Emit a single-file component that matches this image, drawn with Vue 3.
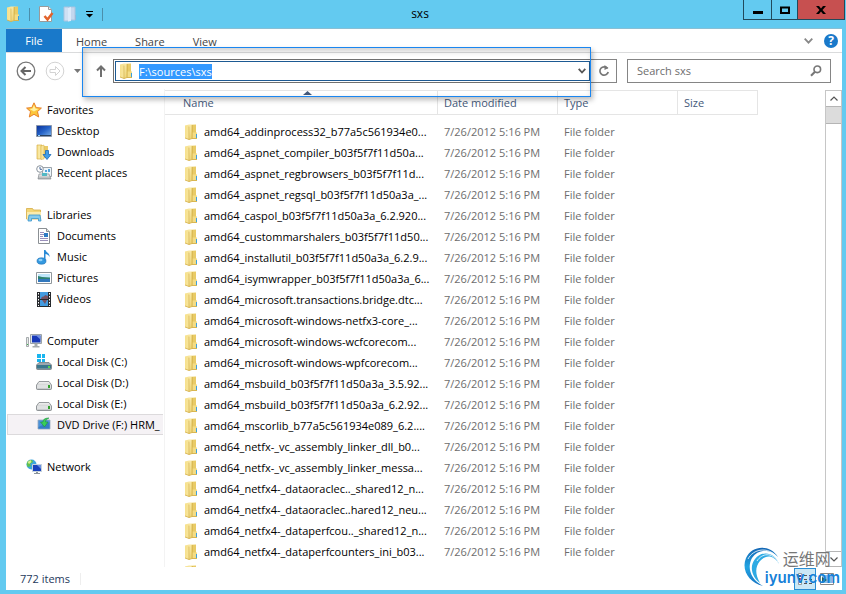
<script setup>
import { ref, onMounted } from 'vue'

const path = ref('F:\\sources\\sxs')
const query = ref('')
const pathInput = ref(null)

const groups = [
  { name: 'Favorites', icon: 'star', items: [
    { name: 'Desktop', icon: 'desktop' },
    { name: 'Downloads', icon: 'downloads' },
    { name: 'Recent places', icon: 'recent' },
  ] },
  { name: 'Libraries', icon: 'libraries', items: [
    { name: 'Documents', icon: 'document' },
    { name: 'Music', icon: 'music' },
    { name: 'Pictures', icon: 'picture' },
    { name: 'Videos', icon: 'video' },
  ] },
  { name: 'Computer', icon: 'computer', items: [
    { name: 'Local Disk (C:)', icon: 'system' },
    { name: 'Local Disk (D:)', icon: 'disk' },
    { name: 'Local Disk (E:)', icon: 'disk' },
    { name: 'DVD Drive (F:) HRM_', icon: 'dvd', selected: true },
  ] },
  { name: 'Network', icon: 'network', items: [] },
]

const files = [
  'amd64_addinprocess32_b77a5c561934e0...',
  'amd64_aspnet_compiler_b03f5f7f11d50a...',
  'amd64_aspnet_regbrowsers_b03f5f7f11d...',
  'amd64_aspnet_regsql_b03f5f7f11d50a3a_...',
  'amd64_caspol_b03f5f7f11d50a3a_6.2.920...',
  'amd64_custommarshalers_b03f5f7f11d50...',
  'amd64_installutil_b03f5f7f11d50a3a_6.2.9...',
  'amd64_isymwrapper_b03f5f7f11d50a3a_6...',
  'amd64_microsoft.transactions.bridge.dtc...',
  'amd64_microsoft-windows-netfx3-core_...',
  'amd64_microsoft-windows-wcfcorecom...',
  'amd64_microsoft-windows-wpfcorecom...',
  'amd64_msbuild_b03f5f7f11d50a3a_3.5.92...',
  'amd64_msbuild_b03f5f7f11d50a3a_6.2.92...',
  'amd64_mscorlib_b77a5c561934e089_6.2....',
  'amd64_netfx-_vc_assembly_linker_dll_b0...',
  'amd64_netfx-_vc_assembly_linker_messa...',
  'amd64_netfx4-_dataoraclec.._shared12_n...',
  'amd64_netfx4-_dataoraclec..hared12_neu...',
  'amd64_netfx4-_dataperfcou.._shared12_n...',
  'amd64_netfx4-_dataperfcounters_ini_b03...',
]

onMounted(() => {
  pathInput.value.focus()
  pathInput.value.select()
})
</script>

<template>
  <div class="window">
    <svg class="defs" aria-hidden="true">
      <defs>
        <linearGradient id="gold" x1="0" x2="1" y1="0" y2="0">
          <stop offset="0" stop-color="#f6e08c" /><stop offset=".5" stop-color="#f9e9a6" /><stop offset="1" stop-color="#e6c65c" />
        </linearGradient>
        <linearGradient id="flap" x1="0" x2="1" y1="0" y2="1">
          <stop offset="0" stop-color="#fdf3bd" /><stop offset="1" stop-color="#e8c95f" />
        </linearGradient>
        <linearGradient id="screen" x1="0" x2="1" y1="0" y2="1">
          <stop offset="0" stop-color="#0a2f96" /><stop offset=".5" stop-color="#2563c8" /><stop offset="1" stop-color="#7fb4ea" />
        </linearGradient>
        <linearGradient id="metal" x1="0" x2="0" y1="0" y2="1">
          <stop offset="0" stop-color="#f4f4f4" /><stop offset="1" stop-color="#a9acae" />
        </linearGradient>
        <linearGradient id="swirl" x1="0" x2="0" y1="0" y2="1">
          <stop offset="0" stop-color="#1466b4" /><stop offset=".5" stop-color="#22a4e2" /><stop offset="1" stop-color="#1673c4" />
        </linearGradient>
        <symbol id="i-folder" viewBox="0 0 14 16">
          <path d="M1 1.500L5 .5h7v8l1 1v5l-6 .5-2 .5-4-1.500z" fill="url(#gold)" />
          <path d="M8 1h4v8H8z" fill="#e9cb66" />
          <path d="M8 8.500h5v6H8z" fill="#f3dc85" />
          <path d="M5 2.500L8 1v13l-3 1.500z" fill="url(#flap)" />
          <path d="M5 2.500v13" stroke="#d2ac42" stroke-width=".7" />
          <path d="M8.200 1v13.500" stroke="#c9a23a" stroke-width=".6" />
          <path d="M1 14l4 1.500 3-1h5" fill="none" stroke="#d2ac42" stroke-width=".8" />
          <path d="M12 10h1v4h-1z" fill="#3b9fe0" />
        </symbol>
        <symbol id="i-star" viewBox="0 0 16 16">
          <path d="M8 .8l2.200 4.800 5.200.5-3.900 3.500 1.200 5.400L8 12.300 3.300 15l1.200-5.400L.6 6.100l5.200-.5z" fill="#fcc63a" stroke="#e8812a" />
          <path d="M8 3l1.400 3.600 3 .3L8 9.500 3.500 7l3-.4z" fill="#fff0a0" />
        </symbol>
        <symbol id="i-desktop" viewBox="0 0 16 16">
          <path d="M.5 2.500h15v11H.5z" fill="url(#screen)" stroke="#8a97ad" />
          <path d="M1 12h14v1H1z" fill="#26405f" /><path d="M2 12h2v1H2z" fill="#8fd0ff" />
        </symbol>
        <symbol id="i-downloads" viewBox="0 0 16 16">
          <path d="M1 1h5v14H1z" fill="url(#gold)" stroke="#d7b047" stroke-width=".7" />
          <path d="M6 2h6v12H6z" fill="#eacb68" /><path d="M5 2l3-1v14l-3 .5z" fill="#f8e49a" stroke="#d7b047" stroke-width=".5" />
          <path d="M9.500 6.500h3v4h2.500L11 15.500 7 10.500h2.500z" fill="#409ee8" stroke="#1c69b5" stroke-width=".8" />
        </symbol>
        <symbol id="i-recent" viewBox="0 0 16 16">
          <path d="M6.500 2.500h9v9h-9z" fill="#edf5fa" stroke="#9ba3aa" />
          <path d="M9 5h2v2H9zM12 4h2v3h-2z" fill="#54a5dd" />
          <path d="M3 9h10l2 5H2z" fill="url(#metal)" stroke="#858b90" stroke-width=".7" />
          <path d="M6 8h5v3H6z" fill="#52b8c4" /><circle cx="4" cy="4" r="3.300" fill="#fff" stroke="#8b949d" />
          <path d="M4 2v2.300h2" fill="none" stroke="#43679b" />
        </symbol>
        <symbol id="i-libraries" viewBox="0 0 16 16">
          <path d="M.5 1.500h6l1 1.500h7v9H.5z" fill="#f4d675" stroke="#d5ac45" stroke-width=".8" />
          <path d="M1 5h14v7H1z" fill="#fbebac" />
          <path d="M3 8h11l1 6h-2.500v-2.500h-7V14H2z" fill="#86cbed" stroke="#3996cc" stroke-width=".8" />
        </symbol>
        <symbol id="i-document" viewBox="0 0 16 16">
          <path d="M2.500 .5h8l3 3v12h-11z" fill="#fff" stroke="#8b9094" /><path d="M10.500 .5v3h3" fill="#ddd" stroke="#8b9094" />
          <path d="M4 4.500h4M4 6.500h4M4 8.500h3M4 10.500h8M4 12.500h8" stroke="#9a8fba" /><path d="M8 5h4v4H8z" fill="#2f7cc4" />
        </symbol>
        <symbol id="i-music" viewBox="0 0 16 16">
          <ellipse cx="5.500" cy="12" rx="4.500" ry="3.200" fill="#3399e0" stroke="#1c6db2" stroke-width=".6" />
          <path d="M8 12V1h1.500c.5 2.500 4.500 3 4 7-.7-2-2-2.600-4-3v7z" fill="#2a8bd6" /><ellipse cx="4.500" cy="11" rx="2" ry="1.200" fill="#8fd0f7" />
        </symbol>
        <symbol id="i-picture" viewBox="0 0 16 16">
          <path d="M.5 2.500h15v11H.5z" fill="#fff" stroke="#8f969b" /><path d="M2 4h12v8H2z" fill="#bfe6fa" />
          <path d="M2 6l4 1 8 .5V9H2z" fill="#2d8271" /><path d="M2 9h12v3H2z" fill="#3278bd" />
        </symbol>
        <symbol id="i-video" viewBox="0 0 16 16">
          <path d="M1 1h14v15H1z" fill="#26292d" /><path d="M4 1h8v7H4zM4 9h8v6H4z" fill="#439be0" />
          <path d="M5 8c1-4 3-1 4-4l3 1v3zM6 9h5l-2 4z" fill="#765263" />
          <path d="M2.500 2v13M13.500 2v13" stroke="#fff" stroke-dasharray="1.500 1.500" />
        </symbol>
        <symbol id="i-computer" viewBox="0 0 16 16">
          <path d="M.5 4.500h2v9h-2z" fill="#e8eaea" stroke="#92989b" stroke-width=".8" /><path d="M1 11h1v1H1z" fill="#3ab64b" />
          <path d="M4.500 1.500h11v9h-11z" fill="#dde3e6" stroke="#9ba3a8" /><path d="M6 2.500h8.500v7H6z" fill="#1738b8" /><path d="M10 2.500h4.500v4z" fill="#7190e3" />
          <path d="M8.500 11h3v2h2v1.500h-7V13h2z" fill="#a5abae" />
        </symbol>
        <symbol id="i-disk" viewBox="0 0 16 16">
          <path d="M3 6.500h10l2.500 3.500v3.500q0 1-1 1h-13q-1 0-1-1V10z" fill="url(#metal)" stroke="#7e8386" stroke-width=".8" />
          <path d="M1 10h14v3.500H1z" fill="#dfe1e2" /><path d="M12 10h2v3h-2z" fill="#33a02e" />
        </symbol>
        <symbol id="i-system" viewBox="0 0 16 16">
          <path d="M3 8.500h10l2.500 2.500v3.500q0 1-1 1h-13q-1 0-1-1V11z" fill="#9ba7ae" stroke="#727a7f" stroke-width=".8" />
          <path d="M1 11h14v3.500H1z" fill="#3b778d" /><path d="M12 12h2v2h-2z" fill="#57d64c" />
          <path d="M1 0h4v4H1zM6 0h3v4H6zM1 5h4v3H1zM6 5h3v3H6z" fill="#19b5ef" />
        </symbol>
        <symbol id="i-dvd" viewBox="0 0 16 16">
          <path d="M2 3h12v9H2z" fill="#4b92da" stroke="#9aa9bb" stroke-width=".8" /><path d="M2.500 10l11-5v6.500h-11z" fill="#367cc6" />
          <path d="M13 1C8 1 7 3 7 5H4.500l4 5 3.500-5H9.500c0-2 1.500-3 3.500-4z" fill="#39cd58" stroke="#17893b" stroke-width=".5" />
        </symbol>
        <symbol id="i-network" viewBox="0 0 16 16">
          <circle cx="5.500" cy="5.500" r="5" fill="#3ea7dd" /><path d="M2 2c3-2 5-1 5 1L4 5l1 2-3 1C0 6 1 3 2 2z" fill="#5fc04e" /><path d="M1.500 3l3-2 1 2-2.500 2z" fill="#d9ee92" />
          <path d="M6.500 5.500h9v7h-9z" fill="#1b43bd" stroke="#c7d2da" /><path d="M11 6h4v4z" fill="#6a91e4" /><path d="M10 13h2v1h2v1H8v-1h2z" fill="#8b959c" />
        </symbol>
      </defs>
    </svg>

    <header class="titlebar">
      <div class="quick">
        <svg class="folder"><use href="#i-folder" /></svg>
        <span class="bar"></span>
        <button type="button" aria-label="Properties">
          <svg width="15" height="16" viewBox="0 0 15 16"><path d="M.5 .5h9l3 3v12H.5z" fill="#fff" stroke="#9a9a9a" /><path d="M9.500 .5v3h3" fill="#eee" stroke="#9a9a9a" /><path d="M5.500 10l3 3.500L13.500 7" fill="none" stroke="#e2632c" stroke-width="2.500" /></svg>
        </button>
        <button type="button" aria-label="New folder">
          <svg width="14" height="16" viewBox="0 0 14 16"><path d="M1 1h5v14H1z" fill="#cfe0f3" stroke="#a9c3df" /><path d="M6 1h6v13H6z" fill="#c4d7ee" stroke="#a9c3df" /><path d="M5 2l3-1v14l-3 .5z" fill="#dceafa" /><path d="M12 9h1v5h-1z" fill="#94b8db" /></svg>
        </button>
        <button type="button" aria-label="Customize">
          <svg width="7" height="7" viewBox="0 0 7 7"><path d="M0 0h7v1H0zM0 3h7L3.500 6.500z" /></svg>
        </button>
        <span class="bar"></span>
      </div>
      <h1>sxs</h1>
      <div class="controls">
        <button type="button" class="min" aria-label="Minimize"><svg width="10" height="10"><path d="M0 6h10v3H0z" /></svg></button>
        <button type="button" class="max" aria-label="Maximize"><svg width="10" height="8"><path d="M1 1.500h8v5.500H1z" fill="none" stroke="#000" stroke-width="2" /></svg></button>
        <button type="button" class="close" aria-label="Close"><svg width="10" height="8" viewBox="0 0 10 8"><path d="M0 0h3l2 2.500L7 0h3L6.500 4 10 8H7L5 5.500 3 8H0l3.500-4z" /></svg></button>
      </div>
    </header>

    <div class="client">
      <nav class="tabs">
        <a href="#file" class="file">File</a>
        <a href="#home">Home</a>
        <a href="#share">Share</a>
        <a href="#view">View</a>
        <span class="grow"></span>
        <button type="button" aria-label="Expand ribbon"><svg width="9" height="6" viewBox="0 0 9 6"><path d="M.7 .7l3.800 4 3.800-4" fill="none" stroke="#888" stroke-width="1.800" /></svg></button>
        <button type="button" aria-label="Help" class="help">?</button>
      </nav>

      <div class="navbar">
        <div class="history">
          <button type="button" aria-label="Back"><svg width="20" height="20" viewBox="0 0 20 20"><circle cx="10" cy="10" r="8.800" fill="none" stroke="#777" stroke-width="1.300" /><path d="M15 10H6M9.500 6L5.500 10l4 4" fill="none" stroke="#666" stroke-width="2" /></svg></button>
          <button type="button" aria-label="Forward"><svg width="20" height="20" viewBox="0 0 20 20"><circle cx="10" cy="10" r="8.800" fill="none" stroke="#d3d3d3" /><path d="M5 8.500h5.500V5.500L15 10l-4.500 4.500v-3H5z" fill="none" stroke="#d3d3d3" /></svg></button>
          <button type="button" aria-label="Recent locations"><svg width="7" height="4"><path d="M0 0h7L3.500 4z" fill="#777" /></svg></button>
        </div>
        <div class="location">
          <button type="button" class="up" aria-label="Up"><svg width="10" height="12" viewBox="0 0 10 12"><path d="M5 12V2M1 5.500L5 1.500l4 4" fill="none" stroke="#707070" stroke-width="2" /></svg></button>
          <div class="address">
            <label class="address-inner">
              <svg class="folder"><use href="#i-folder" /></svg>
              <input ref="pathInput" v-model="path" type="text" aria-label="Address" spellcheck="false" />
              <svg width="8" height="6" viewBox="0 0 8 6"><path d="M.7 .8L4 4.500 7.300 .8" fill="none" stroke="#555" stroke-width="1.800" /></svg>
            </label>
          </div>
        </div>
        <button type="button" class="refresh" aria-label="Refresh"><svg width="12" height="12" viewBox="0 0 12 12"><path d="M9.500 3.500A4.200 4.200 0 1 0 10.200 7" fill="none" stroke="#777" stroke-width="1.700" /><path d="M6.500 0v5L10.500 3z" fill="#777" /></svg></button>
        <label class="search">
          <input v-model="query" type="text" placeholder="Search sxs" aria-label="Search sxs" />
          <svg width="12" height="12" viewBox="0 0 12 12"><circle cx="7.300" cy="4.300" r="3.300" fill="none" stroke="#777" stroke-width="1.600" /><path d="M5 6.800L1 10.800" stroke="#777" stroke-width="2.200" /></svg>
        </label>
      </div>

      <main class="body">
        <aside class="tree">
          <ul v-for="g in groups" :key="g.name">
            <li><a href="#" class="node"><svg><use :href="'#i-' + g.icon" /></svg>{{ g.name }}</a></li>
            <li v-for="i in g.items" :key="i.name">
              <a href="#" class="node child" :class="{ selected: i.selected }"><svg><use :href="'#i-' + i.icon" /></svg>{{ i.name }}</a>
            </li>
          </ul>
        </aside>

        <section class="list">
          <table>
            <colgroup><col class="c-name" /><col class="c-mid" /><col class="c-mid" /><col class="c-size" /></colgroup>
            <thead>
              <tr>
                <th class="sorted">Name<svg width="9" height="4"><path d="M0 4h9L4.500 0z" fill="#44597a" /></svg></th>
                <th>Date modified</th><th>Type</th><th>Size</th>
              </tr>
            </thead>
            <tbody>
              <tr v-for="f in files" :key="f">
                <td><span class="entry"><svg class="folder"><use href="#i-folder" /></svg>{{ f }}</span></td>
                <td>7/26/2012 5:16 PM</td><td>File folder</td><td></td>
              </tr>
              <tr><td><span class="entry"><svg class="folder"><use href="#i-folder" /></svg></span></td><td></td><td></td><td></td></tr>
            </tbody>
          </table>
        </section>

        <div class="scroll">
          <button type="button" aria-label="Scroll up"><svg width="8" height="5" viewBox="0 0 8 5"><path d="M.5 4.500L4 1l3.500 3.500" fill="none" stroke="#555" stroke-width="1.200" /></svg></button>
          <div class="thumb"></div>
          <span class="grow"></span>
          <button type="button" aria-label="Scroll down"><svg width="8" height="5" viewBox="0 0 8 5"><path d="M.5 .5L4 4 7.500 .5" fill="none" stroke="#555" stroke-width="1.200" /></svg></button>
        </div>
      </main>

      <footer class="status">
        <span class="count">772 items</span>
        <span class="grow"></span>
        <button type="button" class="view on" aria-label="Details"><svg width="14" height="12" viewBox="0 0 14 12"><path d="M.5 .5h3v11h-3z" fill="#fff" stroke="#888" stroke-width=".8" /><path d="M1 2h2v2H1z" fill="#35a" /><path d="M1 5h2v2H1z" fill="#d33" /><path d="M6 2.500h3M11 2.500h3M6 6.500h3M11 6.500h3M6 10.500h3M11 10.500h3" stroke="#555" /></svg></button>
        <button type="button" class="view" aria-label="Large icons"><svg width="14" height="12" viewBox="0 0 14 12"><path d="M.5 .5h13v11H.5z" fill="#fff" stroke="#888" /><path d="M2 2h10v8H2z" fill="#86bde8" /><path d="M2 4l5 3-5 3z" fill="#286648" /></svg></button>
      </footer>
    </div>

    <div class="watermark">
      <svg width="38" height="40" viewBox="0 0 38 40">
        <path d="M35 10C27-3 9-2 3 11c-5 12 3 25 17 28C7 32 4 20 9 11 15 2 27 1 35 10z" fill="url(#swirl)" />
        <path d="M36 17C32 5 19 3 12 12c-6 8-3 18 5 24-5-9-5-16 0-22 6-7 14-6 19 3z" fill="#2eaae3" />
        <path d="M5 12C10 2 25-1 34 10" fill="none" stroke="#fff" stroke-width=".8" /><path d="M14 14c5-8 15-9 21 1" fill="none" stroke="#fff" stroke-width=".8" />
      </svg>
      <span class="cn">运维网</span>
      <span class="domain">iyunv.com</span>
    </div>
  </div>
</template>

<style>
body { margin: 0; background: #63caf0; }
</style>

<style scoped>
* { box-sizing: border-box; }
.window {
  position: relative;
  display: flex;
  flex-direction: column;
  height: 100vh;
  padding: 0 4px 4px 6px;
  overflow: hidden;
  background: #63caf0;
  color: #000;
  font: 11px/20px "Open Sans", "Noto Sans CJK SC", sans-serif;
}
.defs { position: absolute; width: 0; height: 0; }
svg { display: block; flex: none; }
a { color: inherit; text-decoration: none; }
button { display: flex; align-items: center; justify-content: center; padding: 0; border: 0; background: none; font: inherit; }
input { min-width: 0; padding: 0; border: 0; outline: 0; background: none; font: inherit; }
.folder { width: 14px; height: 16px; }
.grow { flex: 1; }

.titlebar { display: grid; grid-template-columns: 1fr auto 1fr; height: 28px; flex: none; padding-right: 8px; }
.quick { display: flex; align-items: center; gap: 9px; }
.bar { width: 1px; height: 13px; background: #4b8fab; }
h1 { margin: 0; font-size: 12px; font-weight: 400; line-height: 28px; }
.controls { display: flex; justify-self: end; height: 20px; margin-right: -11px; border: 1px solid #214a5c; border-top: 0; }
.controls button { border-right: 1px solid #214a5c; }
.min { width: 28px; }
.max { width: 26px; }
.controls .close { width: 46px; border: 0; background: #c75050; }

.client { display: flex; flex: 1; flex-direction: column; min-height: 0; border-top: 1px solid #8abfd4; background: #fff; }
.tabs { display: flex; height: 24px; flex: none; align-items: center; border-bottom: 1px solid #dadbdc; color: #444; }
.tabs a { padding: 2px 14px 0; }
.tabs .file { width: 56px; height: 23px; padding: 0; background: #1979ca; color: #fff; line-height: 24px; text-align: center; }
.tabs .help { width: 14px; height: 14px; margin: 0 4px 0 11px; border-radius: 50%; background: #1979ca; color: #fff; font-size: 12px; font-weight: 700; line-height: 14px; }

.navbar { display: flex; height: 36px; flex: none; padding: 6px 11px 6px 10px; }
.history { display: flex; align-items: center; gap: 9px; }
.location { position: relative; display: flex; flex: 1; padding-left: 15px; }
.location::after {
  position: absolute;
  z-index: 2;
  inset: -12px 0 -14px 1px;
  border: 1px solid #1a86f0;
  box-shadow: 2px 3px 5px #0004, inset 2px 3px 6px #0003;
  content: "";
  pointer-events: none;
}
.up { width: 10px; margin-right: 7px; }
.address { flex: 1; padding: 1px; border: 1px solid #707070; border-right: 0; }
.address-inner { display: flex; height: 20px; align-items: center; gap: 6px; padding: 0 3px; border: 1px solid #1d5a93; }
.address input { flex: 1; height: 17px; padding-top: 1px; line-height: 16px; }
.address input::selection { background: #3399ff; color: #fff; }
.refresh { width: 26px; border: 1px solid #858585; border-left: 0; }
.search { display: flex; width: 204px; align-items: center; margin-left: 10px; padding: 0 8px 0 9px; border: 1px solid #858585; }
.search input { flex: 1; }
.search input::placeholder { color: #6d6d6d; opacity: 1; }

.body { display: flex; flex: 1; min-height: 0; }
.tree { width: 159px; flex: none; padding-top: 10px; border-right: 1px solid #f3f3f3; }
.tree ul { margin: 0 0 21px; padding: 0; list-style: none; }
.node { display: flex; height: 21px; align-items: center; gap: 5px; margin: 0 1px; padding-left: 19px; overflow: hidden; white-space: nowrap; }
.node svg { width: 16px; height: 16px; }
.child { padding-left: 29px; }
.selected { padding-left: 28px; border: 1px solid #dcdadc; border-right: 0; background: #f5f2f5; }

.list { flex: 1; min-width: 0; padding-top: 1px; overflow: hidden; }
table { width: 593px; border-collapse: separate; border-spacing: 0; table-layout: fixed; }
.c-name { width: 273px; }
.c-mid { width: 120px; }
.c-size { width: 80px; }
th { height: 25px; padding: 0 6px; border: 1px solid #e5e5e5; border-left: 0; color: #44597a; font-weight: 400; text-align: left; }
th.sorted { position: relative; padding-left: 18px; }
.sorted svg { position: absolute; top: 0; left: 138px; }
tbody::before { display: block; height: 6px; content: ""; }
td { height: 21px; padding: 0 0 0 6px; color: #6d6d6d; line-height: 20px; white-space: nowrap; }
td:first-child { padding-left: 19px; color: #000; }
.entry { display: flex; align-items: center; gap: 6px; }

.scroll { display: flex; width: 17px; flex: none; flex-direction: column; margin-top: 1px; border: 1px solid #c6c6c6; border-bottom: 0; }
.scroll button { height: 16px; border-bottom: 1px solid #b5b5b5; }
.scroll button:last-child { border-top: 1px solid #b5b5b5; }
.thumb { height: 17px; border-bottom: 1px solid #b5b5b5; background: #dcdcdc; }

.status { display: flex; height: 23px; flex: none; align-items: center; padding: 0 4px 0 14px; color: #1e395b; }
.count { padding-right: 10px; border-right: 1px solid #eee; line-height: 12px; }
.view { width: 22px; height: 22px; }
.view.on { border: 1px solid #2a8dd4; background: #cbe8f6; }

.watermark { position: absolute; right: 6px; bottom: 6px; display: grid; grid-template-columns: 22px 18px auto; grid-template-rows: 21px 20px; }
.watermark svg { grid-area: 1 / 1 / 3 / 3; }
.cn { grid-area: 1 / 3; color: #777; font-size: 16px; line-height: 24px; }
.domain { grid-area: 2 / 2 / 3 / 4; color: #1680d8; font: 600 15px/20px Inter, sans-serif; }
</style>
